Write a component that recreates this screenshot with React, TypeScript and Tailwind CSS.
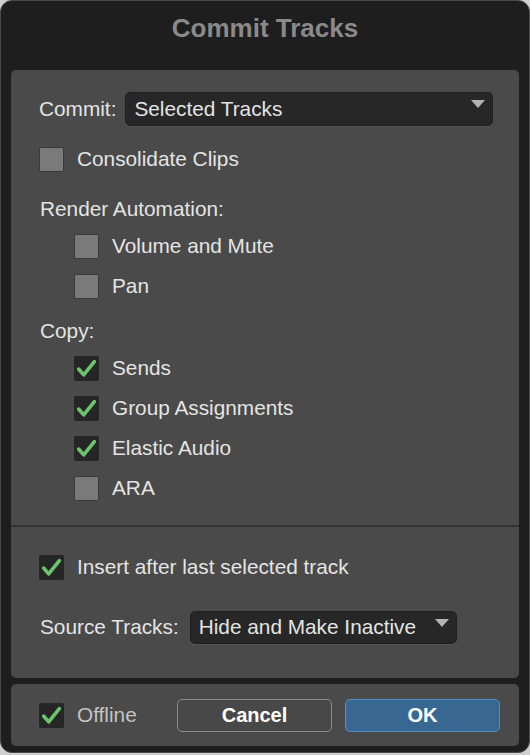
const FONT = { fontFamily: '"Liberation Sans", Arial, Helvetica, sans-serif' };

function Check({ checked }: { checked: boolean }) {
  if (!checked) {
    return <div className="w-[25px] h-[25px] shrink-0 bg-[#7a7a7a] border border-[#3a3a3a] rounded-[2px]" />;
  }
  return (
    <div className="w-[25px] h-[25px] shrink-0 bg-[#262626] rounded-[2px] flex items-center justify-center">
      <svg width="21" height="21" viewBox="0 0 20 20" fill="none">
        <path d="M2.5 10.5l4.8 5.5L17.5 3.5" stroke="#6cc46f" strokeWidth="3.4" strokeLinecap="round" strokeLinejoin="round" />
      </svg>
    </div>
  );
}

function CheckRow({ label, checked, indent, dim }: { label: string; checked: boolean; indent?: boolean; dim?: boolean }) {
  return (
    <div className={`h-[40px] flex items-center gap-[13px] ${indent ? 'pl-[63px]' : 'pl-[28px]'}`}>
      <Check checked={checked} />
      <span className={dim ? 'text-[#c4c4c4]' : 'text-[#e4e4e4]'}>{label}</span>
    </div>
  );
}

function Dropdown({ value, className }: { value: string; className: string }) {
  return (
    <div className={`relative bg-[#272727] border border-[#1f1f1f] rounded-[5px] flex items-center pl-[8px] text-[#e4e4e4] shadow-[0_1px_0_rgba(255,255,255,0.06)] ${className}`}>
      {value}
      <svg className="absolute right-[7px] top-[7px]" width="14" height="9" viewBox="0 0 14 9">
        <path d="M0 0h14L7 8z" fill="#b4b4b4" />
      </svg>
    </div>
  );
}

export default function App() {
  return (
    <div className="w-[530px] h-[755px] bg-[#cfcfcf]" style={FONT}>
      <div className="w-[530px] h-[753px] bg-[#1e1e1e] rounded-[12px] border border-[#4a4a4a] flex flex-col text-[20.8px]">
        {/* Title */}
        <div className="h-[69px] flex justify-center pt-[10px]">
          <span className="text-[26px] font-bold text-[#8a8a8a] leading-[34px]">Commit Tracks</span>
        </div>

        {/* Main panel */}
        <div className="mx-[10px] h-[608px] bg-[#4a4a4a] rounded-[5px] flex flex-col pt-[22px]">
          <div className="flex items-center pl-[28px] gap-[9px] h-[34px]">
            <span className="text-[#e4e4e4]">Commit:</span>
            <Dropdown value="Selected Tracks" className="w-[368px] h-[34px]" />
          </div>

          <div className="mt-[13px]">
            <CheckRow label="Consolidate Clips" checked={false} />
          </div>

          <div className="mt-[15px] h-[30px] flex items-center pl-[29px] text-[#e4e4e4]">Render Automation:</div>
          <div className="mt-[2px]">
            <CheckRow label="Volume and Mute" checked={false} indent />
            <CheckRow label="Pan" checked={false} indent />
          </div>

          <div className="mt-[10px] h-[30px] flex items-center pl-[29px] text-[#e4e4e4]">Copy:</div>
          <div className="mt-[2px]">
            <CheckRow label="Sends" checked indent />
            <CheckRow label="Group Assignments" checked indent />
            <CheckRow label="Elastic Audio" checked indent />
            <CheckRow label="ARA" checked={false} indent />
          </div>

          <div className="mt-[17px] h-[2px] bg-[#333333]" />

          <div className="mt-[20px]">
            <CheckRow label="Insert after last selected track" checked />
          </div>

          <div className="mt-[24px] flex items-center pl-[29px] gap-[11px] h-[32px]">
            <span className="text-[#e4e4e4]">Source Tracks:</span>
            <Dropdown value="Hide and Make Inactive" className="w-[267px] h-[33px]" />
          </div>
        </div>

        {/* Footer */}
        <div className="mx-[10px] mt-[6px] h-[62px] bg-[#4a4a4a] rounded-[5px] flex items-center">
          <div className="flex items-center gap-[13px] pl-[28px] w-[166px]">
            <Check checked />
            <span className="text-[#c4c4c4]">Offline</span>
          </div>
          <button className="w-[155px] h-[33px] rounded-[5px] border border-[#8c8c8c] bg-[#484848] text-white font-bold text-[20px] flex items-center justify-center">
            Cancel
          </button>
          <button className="ml-[13px] w-[155px] h-[33px] rounded-[5px] border border-[#4f8fc6] bg-[#386891] text-white font-bold text-[20px] flex items-center justify-center">
            OK
          </button>
        </div>
      </div>
    </div>
  );
}
